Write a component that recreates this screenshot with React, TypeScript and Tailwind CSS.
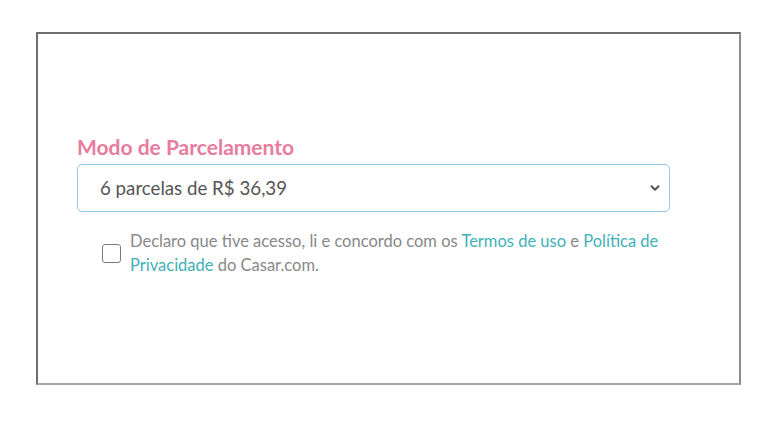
import { ChevronDown } from 'lucide-react';

export default function App() {
    return (
        <div className="min-h-[439px] w-[772px] bg-white pt-[32px] pl-[36px]" style={{ fontFamily: 'Lato, "Open Sans", sans-serif' }}>
            <div className="h-[353px] w-[705px] border-2 border-t-[#6e6e6e] border-l-[#6e6e6e] border-r-[#8c8c8c] border-b-[#a6a6a6] bg-white pl-[39px] pt-[100px]">
                <label className="block text-[21px] leading-[25px] font-bold text-[#e87c9e]">Modo de Parcelamento</label>
                <div className="relative mt-[5px] w-[593px]">
                    <select
                        defaultValue="6"
                        className="block h-[48px] w-full appearance-none rounded-[5px] border border-[#94c8ef] bg-white pl-[22px] text-[18.7px] text-[#555555] outline-none"
                    >
                        <option value="6">6 parcelas de R$ 36,39</option>
                    </select>
                    <ChevronDown className="pointer-events-none absolute right-[8px] top-[17px] h-[14px] w-[14px] text-[#555555]" strokeWidth={3.5} />
                </div>
                <div className="mt-[17px] flex w-[600px] items-center gap-[9px] pl-[25px]">
                    <span className="h-[19px] w-[19px] shrink-0 rounded-[3px] border-[1.5px] border-[#7a7a7a] bg-white" />
                    <p className="text-[16.5px] leading-[24px] text-[#888888]">
                        Declaro que tive acesso, li e concordo com os{' '}
                        <a className="text-[#3fb1b7]">Termos de uso</a> e{' '}
                        <a className="text-[#3fb1b7]">Política de Privacidade</a> do Casar.com.
                    </p>
                </div>
            </div>
        </div>
    );
}
